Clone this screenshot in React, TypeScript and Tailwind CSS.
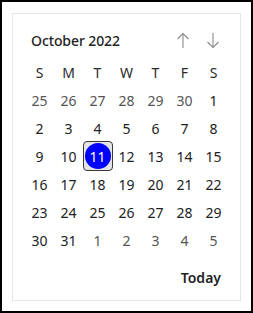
import React from "react";

const weekdays = ["S", "M", "T", "W", "T", "F", "S"];

type Day = { n: number; muted?: boolean; selected?: boolean };

const days: Day[] = [
  ...[25, 26, 27, 28, 29, 30].map((n) => ({ n, muted: true })),
  ...Array.from({ length: 31 }, (_, i) => ({ n: i + 1, selected: i + 1 === 11 })),
  ...[1, 2, 3, 4, 5].map((n) => ({ n, muted: true })),
];

function ArrowUp() {
  return (
    <svg width="14" height="17" viewBox="0 0 14 17" fill="none" stroke="#8a8a8a" strokeWidth="1.1">
      <path d="M7 16V1.5" />
      <path d="M1.5 7L7 1.5L12.5 7" />
    </svg>
  );
}

function ArrowDown() {
  return (
    <svg width="14" height="17" viewBox="0 0 14 17" fill="none" stroke="#8a8a8a" strokeWidth="1.1">
      <path d="M7 1V15.5" />
      <path d="M1.5 10L7 15.5L12.5 10" />
    </svg>
  );
}

export default function App() {
  return (
    <div
      className="h-[313px] w-[253px] border-2 border-black bg-white pl-[10px] pt-[11px]"
      style={{ fontFamily: '"Noto Sans", "Open Sans", sans-serif' }}
    >
      <div className="flex h-[288px] w-[229px] flex-col border border-[#e6e6e6] pt-[12px] pl-[12px]">
        <div className="flex h-[28px] w-[203px] items-center">
          <span className="flex-1 pl-[6px] text-[14px] font-medium tracking-[-0.1px] text-[#1f1f1f]">
            October 2022
          </span>
          <button className="flex h-[28px] w-[30px] items-center justify-center">
            <ArrowUp />
          </button>
          <button className="flex h-[28px] w-[30px] items-center justify-center">
            <ArrowDown />
          </button>
        </div>
        <div className="mt-[4px] grid w-[203px] grid-cols-7">
          {weekdays.map((d, i) => (
            <div key={i} className="flex h-[28px] items-center justify-center text-[14px] text-[#2a2a2a]">
              {d}
            </div>
          ))}
          {days.map((d, i) => (
            <div key={i} className="flex h-[28px] items-center justify-center">
              {d.selected ? (
                <div className="flex h-[30px] w-[30px] shrink-0 items-center justify-center rounded-[4px] border border-[#3a3a3a] bg-[#e4e4e4]">
                  <div className="flex h-[26px] w-[26px] items-center justify-center rounded-full bg-[#0000ff] text-[14px] text-white">
                    {d.n}
                  </div>
                </div>
              ) : (
                <span className={`text-[14px] ${d.muted ? "text-[#555555]" : "text-[#222222]"}`}>{d.n}</span>
              )}
            </div>
          ))}
        </div>
        <div className="mt-[9px] flex w-[203px] justify-end">
          <button className="flex h-[28px] items-center px-[7px] text-[14px] font-semibold text-[#1f1f1f]">
            Today
          </button>
        </div>
      </div>
    </div>
  );
}
